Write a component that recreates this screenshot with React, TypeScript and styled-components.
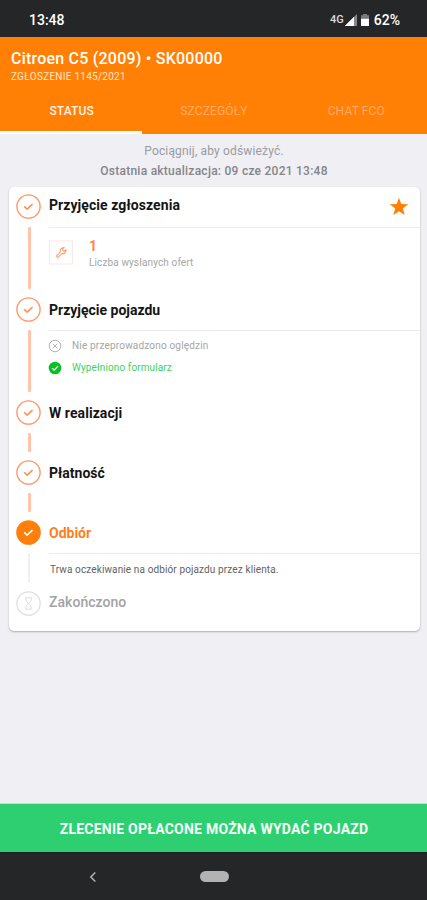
import React from "react";
import styled, { createGlobalStyle } from "styled-components";

const GlobalStyle = createGlobalStyle`
  *, *::before, *::after { box-sizing: border-box; }
  body { margin: 0; font-family: Roboto, "Liberation Sans", sans-serif; }
`;

const Screen = styled.div`
  display: flex;
  flex-direction: column;
  width: 427px;
  height: 900px;
  background: #efeff4;
  overflow: hidden;
`;

const StatusBar = styled.div`
  display: flex;
  align-items: center;
  height: 37px;
  padding: 3px 27px 0 29px;
  background: #242628;
  color: #fff;
`;

const Label = styled.span<{
  $size: number;
  $weight?: number;
  $color?: string;
  $spacing?: number;
  $line?: number;
}>`
  display: block;
  white-space: nowrap;
  font-size: ${(p) => p.$size}px;
  font-weight: ${(p) => p.$weight ?? 400};
  color: ${(p) => p.$color ?? "inherit"};
  letter-spacing: ${(p) => p.$spacing ?? 0}px;
  line-height: ${(p) => p.$line ?? 16}px;
`;

const StatusIcons = styled.div`
  display: flex;
  align-items: center;
  margin-left: auto;
`;

const SignalIcon = styled.svg`
  display: block;
  width: 12px;
  height: 12px;
  margin: 0 4px 0 1px;
`;

const BatteryIcon = styled.svg`
  display: block;
  width: 8px;
  height: 12px;
  margin-right: 5px;
`;

const Header = styled.header`
  display: flex;
  flex-direction: column;
  height: 97px;
  padding-top: 12px;
  background: #ff8004;
  color: #fff;
`;

const HeaderTitles = styled.div`
  height: 38px;
  padding-left: 11px;
`;

const Tabs = styled.nav`
  display: grid;
  grid-template-columns: repeat(3, 1fr);
  flex: 1;
`;

const Tab = styled.div<{ $active?: boolean }>`
  display: flex;
  justify-content: center;
  padding: 16px 0 0 1px;
  color: ${(p) => (p.$active ? "#fff2e4" : "#ffab62")};
  border-bottom: 3px solid ${(p) => (p.$active ? "#fff" : "transparent")};
`;

const Content = styled.main`
  display: flex;
  flex-direction: column;
  flex: 1;
  padding: 7px 7px 0 9px;
`;

const RefreshInfo = styled.div`
  display: flex;
  flex-direction: column;
  align-items: center;
  gap: 4px;
  height: 46px;
  padding: 2px 1px 0 0;
`;

const Card = styled.section`
  height: 444px;
  padding: 7px 0 0 7px;
  border-radius: 5px;
  background: #fff;
  box-shadow: 0 1px 2px rgba(0, 0, 0, 0.28);
`;

const StepRow = styled.div<{ $height: number }>`
  display: flex;
  height: ${(p) => p.$height}px;
`;

const Rail = styled.div`
  display: flex;
  flex-direction: column;
  align-items: center;
  width: 25px;
  margin-right: 8px;
`;

const StepIcon = styled.svg`
  display: block;
  flex: none;
  width: 25px;
  height: 25px;
`;

const Connector = styled.div<{ $muted?: boolean }>`
  flex: 1;
  width: ${(p) => (p.$muted ? 2 : 3)}px;
  margin: 8px 0 8px 1px;
  border-radius: 1px;
  background: ${(p) => (p.$muted ? "#f0f0f0" : "#ffc4aa")};
`;

const StepBody = styled.div`
  flex: 1;
`;

const StepHead = styled.div<{ $lowered: boolean }>`
  display: flex;
  justify-content: space-between;
  height: 33px;
  padding: ${(p) => (p.$lowered ? 5 : 3)}px 11px 0 0;
`;

const StarIcon = styled.svg`
  display: block;
  width: 20px;
  height: 20px;
`;

const Details = styled.div`
  border-top: 1px solid #ececec;
`;

const Offer = styled.div`
  display: flex;
  padding-top: 10px;
`;

const OfferIcon = styled.svg`
  display: block;
  width: 24px;
  height: 25px;
  margin: 2px 16px 0 0;
`;

const CheckLine = styled.div`
  display: flex;
  align-items: center;
  gap: 10px;
  height: 22px;
`;

const CheckList = styled.div`
  padding-top: 4px;
`;

const CheckIcon = styled.svg`
  display: block;
  width: 14px;
  height: 14px;
  margin: -1px 0 0 -1px;
`;

const Note = styled.div`
  padding: 8px 0 0 1px;
`;

const PayButton = styled.div`
  display: flex;
  align-items: center;
  justify-content: center;
  height: 49px;
  padding: 1px 0 0 1px;
  border-top: 1px solid #a9ebc5;
  background: #2ecf71;
  color: #f4fff8;
`;

const NavBar = styled.div`
  display: grid;
  grid-template-columns: 1fr 56px 1fr;
  align-items: center;
  justify-items: center;
  height: 48px;
  padding-bottom: 1px;
  border-top: 2px solid #17241f;
  background: #242628;
`;

const BackIcon = styled.svg`
  display: block;
  width: 8px;
  height: 12px;
`;

const HomePill = styled.div`
  width: 29px;
  height: 11px;
  margin-left: 1px;
  border-radius: 6px;
  background: #b3b3b3;
`;

type StepState = "done" | "current" | "pending";

function StepMarker({ state }: { state: StepState }) {
  if (state === "pending") {
    return (
      <StepIcon viewBox="0 0 25 25" fill="none" stroke="#dedede">
        <circle cx="12.5" cy="12.5" r="11.7" strokeWidth="1.2" />
        <path
          d="M9 6.8h7M9 18.2h7M9.8 7v2.2c0 1.5 5.4 5.1 5.4 6.8v2M15.2 7v2.2c0 1.5-5.4 5.1-5.4 6.8v2"
          strokeWidth="1"
        />
      </StepIcon>
    );
  }
  const current = state === "current";
  return (
    <StepIcon viewBox="0 0 25 25" fill="none">
      <circle
        cx="12.5"
        cy="12.5"
        r="11.6"
        fill={current ? "#ff7f0a" : "#fff"}
        stroke={current ? "#ff7f0a" : "#ff9868"}
        strokeWidth="1.4"
      />
      <path
        d="M8.2 12.4l2.9 2.7 5.4-5"
        stroke={current ? "#fff" : "#ff9257"}
        strokeWidth="1.6"
      />
    </StepIcon>
  );
}

interface StepProps {
  title: string;
  state?: StepState;
  height: number;
  spacing?: number;
  connector?: boolean;
  lowered?: boolean;
  star?: boolean;
  children?: React.ReactNode;
}

const titleColors: Record<StepState, string> = {
  done: "#151515",
  current: "#ff7f20",
  pending: "#a3a3a3",
};

function Step({
  title,
  state = "done",
  height,
  spacing = 0.07,
  connector = true,
  lowered = false,
  star,
  children,
}: StepProps) {
  return (
    <StepRow $height={height}>
      <Rail>
        <StepMarker state={state} />
        {connector && <Connector $muted={state === "current"} />}
      </Rail>
      <StepBody>
        <StepHead $lowered={lowered}>
          <Label $size={14} $weight={state === "pending" ? 500 : 700} $color={titleColors[state]} $spacing={spacing}>
            {title}
          </Label>
          {star && (
            <StarIcon viewBox="0 0 20 20">
              <path
                fill="#ff8004"
                d="M10 .7l2.3 6.4 6.9.1-5.4 4.2 2 6.7L10 14.2l-5.8 3.9 2-6.7L.8 7.2l6.9-.1z"
              />
            </StarIcon>
          )}
        </StepHead>
        {children && <Details>{children}</Details>}
      </StepBody>
    </StepRow>
  );
}

export default function App() {
  return (
    <>
      <GlobalStyle />
      <Screen>
        <StatusBar>
          <Label $size={14} $weight={500}>13:48</Label>
          <StatusIcons>
            <Label $size={11} $weight={500} $color="#dedede">4G</Label>
            <SignalIcon viewBox="0 0 12 12">
              <path d="M12 0v12H0z" fill="#85878a" />
              <path d="M9 3v9H0z" fill="#fff" />
              <path d="M9 3v9H0L9 3z" fill="#fff" />
            </SignalIcon>
            <BatteryIcon viewBox="0 0 8 12">
              <path d="M2 0h4v1.3h2V12H0V1.3h2z" fill="#77797b" />
              <path d="M0 4.8h8V12H0z" fill="#fff" />
            </BatteryIcon>
            <Label $size={14} $weight={500}>62%</Label>
          </StatusIcons>
        </StatusBar>

        <Header>
          <HeaderTitles>
            <Label $size={16} $weight={500} $line={20} $spacing={0.22}>Citroen C5 (2009) • SK00000</Label>
            <Label $size={10} $color="#ffe6cd" $spacing={0.26}>ZGŁOSZENIE 1145/2021</Label>
          </HeaderTitles>
          <Tabs>
            <Tab $active><Label $size={12} $weight={500} $spacing={0.15}>STATUS</Label></Tab>
            <Tab><Label $size={12} $spacing={0.15}>SZCZEGÓŁY</Label></Tab>
            <Tab><Label $size={12} $spacing={0.15}>CHAT FCO</Label></Tab>
          </Tabs>
        </Header>

        <Content>
          <RefreshInfo>
            <Label $size={12} $color="#9b9b9f" $spacing={0.16}>Pociągnij, aby odświeżyć.</Label>
            <Label $size={12} $weight={500} $color="#858589" $spacing={0.25}>Ostatnia aktualizacja: 09 cze 2021 13:48</Label>
          </RefreshInfo>
          <Card>
            <Step title="Przyjęcie zgłoszenia" height={103} star>
              <Offer>
                <OfferIcon viewBox="0 0 24 25" fill="none">
                  <rect x=".5" y="1" width="23" height="23" stroke="#fbe9df" />
                  <path
                    d="M7.2 16.1l4.2-4.2c-.5-1.8.4-3.6 2.3-4.2l1.2-.2-1.6 2.1 1.7 1.7 2-1.6c.4 2.4-1.7 4.4-4.1 3.8l-4.2 4.1z"
                    stroke="#ffa06c"
                    strokeWidth="1.1"
                  />
                </OfferIcon>
                <div>
                  <Label $size={14} $weight={700} $color="#ff874a" $line={17}>1</Label>
                  <Label $size={10} $color="#a5a5a5" $spacing={0.12}>Liczba wysłanych ofert</Label>
                </div>
              </Offer>
            </Step>
            <Step title="Przyjęcie pojazdu" height={103.4} spacing={0} lowered>
              <CheckList>
                <CheckLine>
                  <CheckIcon viewBox="0 0 14 14" fill="none" stroke="#b3b3b3">
                    <circle cx="7" cy="7" r="5.8" />
                    <path d="M4.8 4.8l4.4 4.4M9.2 4.8L4.8 9.2" />
                  </CheckIcon>
                  <Label $size={10} $color="#a5a5a5" $spacing={0.18}>Nie przeprowadzono oględzin</Label>
                </CheckLine>
                <CheckLine>
                  <CheckIcon viewBox="0 0 14 14" fill="none">
                    <circle cx="7" cy="7" r="6.3" fill="#08c127" />
                    <path d="M4.2 7.1l2 2 3.8-4" stroke="#fff" strokeWidth="1.3" />
                  </CheckIcon>
                  <Label $size={10} $color="#3ed062" $spacing={0.11}>Wypełniono formularz</Label>
                </CheckLine>
              </CheckList>
            </Step>
            <Step title="W realizacji" height={60} lowered />
            <Step title="Płatność" height={60} spacing={0} lowered />
            <Step title="Odbiór" state="current" height={70.6} spacing={0} lowered>
              <Note>
                <Label $size={10} $color="#626262" $spacing={0.12}>Trwa oczekiwanie na odbiór pojazdu przez klienta.</Label>
              </Note>
            </Step>
            <Step title="Zakończono" state="pending" height={33} spacing={0.04} connector={false} />
          </Card>
        </Content>

        <PayButton>
          <Label $size={14} $weight={700} $spacing={0.23}>ZLECENIE OPŁACONE MOŻNA WYDAĆ POJAZD</Label>
        </PayButton>
        <NavBar>
          <BackIcon viewBox="0 0 8 12" fill="none">
            <path d="M6.3 1.5L1.8 6l4.5 4.5" stroke="#b5b5b5" strokeWidth="1.5" />
          </BackIcon>
          <HomePill />
        </NavBar>
      </Screen>
    </>
  );
}
